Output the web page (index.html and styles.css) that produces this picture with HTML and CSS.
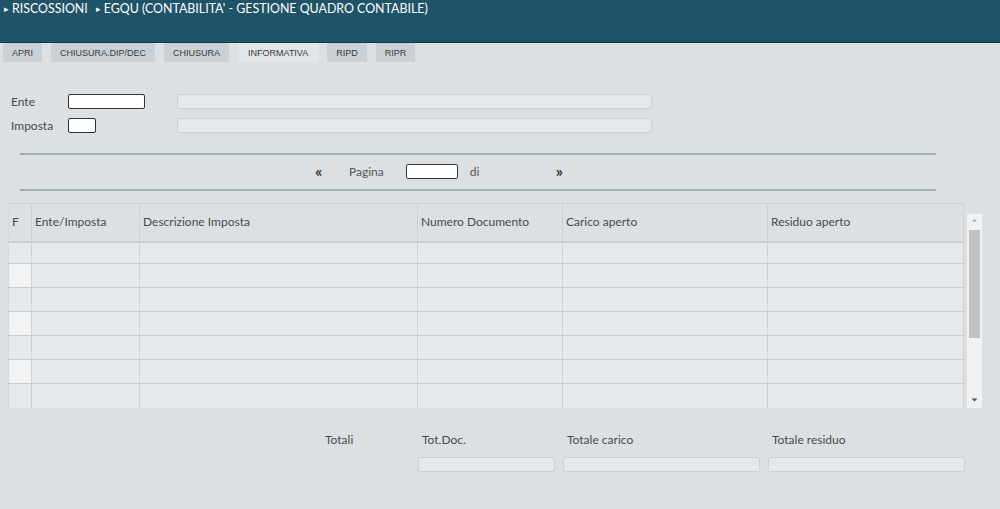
FILE: index.html
```html
<!DOCTYPE html>
<html lang="it">
<head>
<meta charset="utf-8">
<title>EGQU</title>
<link rel="stylesheet" href="styles.css">
</head>
<body>
<header class="topbar">
  <span class="crumb"><span class="tri">&#9656;</span>RISCOSSIONI</span>
  <span class="crumb"><span class="tri">&#9656;</span>EGQU (CONTABILITA' - GESTIONE QUADRO CONTABILE)</span>
</header>
<nav class="tabs">
  <span class="tab">APRI</span>
  <span class="tab">CHIUSURA.DIP/DEC</span>
  <span class="tab">CHIUSURA</span>
  <span class="tab active">INFORMATIVA</span>
  <span class="tab">RIPD</span>
  <span class="tab">RIPR</span>
</nav>
<main class="content">
  <section class="filters">
    <div class="frow">
      <label class="flabel">Ente</label>
      <span class="inp inp-ente"></span>
      <span class="ro ro-wide"></span>
    </div>
    <div class="frow">
      <label class="flabel">Imposta</label>
      <span class="inp inp-imp"></span>
      <span class="ro ro-wide"></span>
    </div>
  </section>
  <section class="pager">
    <span class="arrow">&laquo;</span>
    <span class="plabel">Pagina</span>
    <span class="inp inp-page"></span>
    <span class="plabel di">di</span>
    <span class="arrow next">&raquo;</span>
  </section>
  <section class="gridwrap">
    <div class="table">
      <div class="row head">
        <div class="cell">F</div>
        <div class="cell">Ente/Imposta</div>
        <div class="cell">Descrizione Imposta</div>
        <div class="cell">Numero Documento</div>
        <div class="cell">Carico aperto</div>
        <div class="cell">Residuo aperto</div>
      </div>
      <div class="row first"><div class="cell"></div><div class="cell"></div><div class="cell"></div><div class="cell"></div><div class="cell"></div><div class="cell"></div></div>
      <div class="row alt"><div class="cell"></div><div class="cell"></div><div class="cell"></div><div class="cell"></div><div class="cell"></div><div class="cell"></div></div>
      <div class="row"><div class="cell"></div><div class="cell"></div><div class="cell"></div><div class="cell"></div><div class="cell"></div><div class="cell"></div></div>
      <div class="row alt"><div class="cell"></div><div class="cell"></div><div class="cell"></div><div class="cell"></div><div class="cell"></div><div class="cell"></div></div>
      <div class="row"><div class="cell"></div><div class="cell"></div><div class="cell"></div><div class="cell"></div><div class="cell"></div><div class="cell"></div></div>
      <div class="row alt"><div class="cell"></div><div class="cell"></div><div class="cell"></div><div class="cell"></div><div class="cell"></div><div class="cell"></div></div>
      <div class="row last"><div class="cell"></div><div class="cell"></div><div class="cell"></div><div class="cell"></div><div class="cell"></div><div class="cell"></div></div>
    </div>
    <div class="scrollbar">
      <svg class="sarrow" width="15" height="12" viewBox="0 0 15 12"><path d="M5 7.5 L7.5 5 L10 7.5 Z" fill="#a3a3a3"/></svg>
      <div class="thumb"></div>
      <svg class="sarrow down" width="15" height="12" viewBox="0 0 15 12"><path d="M4.5 4.5 L10.5 4.5 L7.5 7.5 Z" fill="#505050"/></svg>
    </div>
  </section>
  <section class="totals">
    <span class="tlabel totali">Totali</span>
    <span class="tlabel">Tot.Doc.</span>
    <span class="tlabel">Totale carico</span>
    <span class="tlabel">Totale residuo</span>
    <span class="ro ro-doc"></span>
    <span class="ro"></span>
    <span class="ro"></span>
  </section>
</main>
</body>
</html>
```
FILE: styles.css
```css
* { box-sizing: border-box; }
html, body { margin: 0; padding: 0; }
body {
  background: #dce0e3;
  font-family: "Lato", "Open Sans", sans-serif;
  color: #4a4a4a;
  width: 1000px;
  height: 509px;
  overflow: hidden;
}
.topbar {
  height: 43px;
  background: #1f5367;
  border-bottom: 1px solid #12394a;
  color: #fff;
  font-size: 12.4px;
  display: flex;
  gap: 8px;
  padding: 1px 0 0 4px;
  line-height: 16px;
}
.crumb { display: flex; align-items: center; height: 16px; }
.tri { font-size: 9px; margin-right: 3px; }
.tabs {
  height: 19px;
  display: flex;
  gap: 9px;
  padding-left: 3px;
}
.tab {
  background: #c9d1d7;
  font-family: "Liberation Sans", Arial, sans-serif;
  font-size: 9px;
  color: #3a3a3a;
  padding: 0 9px;
  display: flex;
  align-items: center;
  height: 19px;
}
.tab.active { background: #e1e5e8; padding: 0 10px; }
.content { padding: 0; }
.filters {
  padding: 32px 0 0 11px;
  display: flex;
  flex-direction: column;
  gap: 9px;
}
.frow { display: flex; align-items: center; height: 15px; }
.flabel { font-size: 12px; width: 57px; color: #4a4a4a; }
.inp {
  display: inline-block;
  height: 15px;
  background: #fff;
  border: 1px solid #333;
  border-radius: 2px;
}
.inp-ente { width: 77px; margin-right: 32px; }
.inp-imp { width: 28px; margin-right: 81px; }
.ro {
  display: inline-block;
  height: 15px;
  background: #e6e9ec;
  border: 1px solid #cdd0d3;
  border-radius: 2px;
}
.ro-wide { width: 475px; }
.pager {
  margin: 20px 64px 0 20px;
  border-top: 2px solid #9eb0b7;
  border-bottom: 2px solid #9eb0b7;
  height: 38px;
  display: flex;
  align-items: center;
  padding-left: 295px;
  padding-bottom: 1px;
}
.arrow { font-size: 16px; font-weight: 700; color: #333; width: 34px; line-height: 14px; padding-bottom: 2px; }
.plabel { font-size: 12px; color: #555; }
.inp-page { width: 52px; margin-left: 22px; }
.di { margin-left: 12px; width: 86px; }
.next { width: auto; }
.gridwrap {
  margin: 12px 0 0 8px;
  display: flex;
  align-items: flex-start;
  gap: 3px;
}
.table {
  width: 956px;
  border-top: 1px solid #cdd1d4;
}
.row {
  display: grid;
  grid-template-columns: 24px 108px 278px 145px 205px 196px;
  height: 24px;
  border-bottom: 1px solid #cbced1;
  background: #e6e9ec;
}
.row.head { height: 39px; background: #dce0e3; border-bottom: 2px solid #cfd2d5; }
.row.first { height: 21px; }
.row.last { height: 24px; border-bottom: none; }
.cell {
  border-right: 1px solid #cfd2d5;
  font-size: 12px;
  color: #4a4a4a;
  padding: 10px 0 0 3px;
}
.row.alt .cell:first-child { background: #f2f2f2; }
.row .cell:first-child { border-left: 1px solid #d6d9dc; }
.scrollbar {
  margin-top: 11px;
  width: 15px;
  height: 194px;
  background: #f1f1f1;
  display: flex;
  flex-direction: column;
  align-items: center;
}
.sarrow { display: block; flex: none; }
.thumb { width: 11px; height: 108px; background: #c1c1c1; margin-top: 4px; flex: none; }
.sarrow.down { margin-top: auto; margin-bottom: 2px; }
.totals {
  margin: 23px 0 0 325px;
  display: grid;
  grid-template-columns: 93px 145px 205px 197px;
  grid-template-rows: 17px 15px;
  row-gap: 9px;
}
.tlabel { font-size: 12px; color: #4a4a4a; padding-left: 4px; line-height: 17px; }
.totali { padding-left: 0; }
.totals .ro { width: 197px; }
.totals .ro-doc { grid-column: 2; width: 137px; }
```
